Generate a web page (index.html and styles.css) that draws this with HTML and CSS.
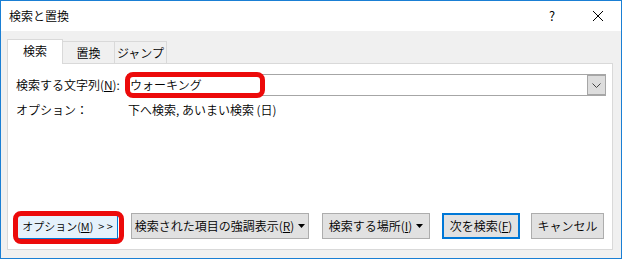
FILE: index.html
```html
<!DOCTYPE html>
<html lang="ja">
<head>
  <meta charset="UTF-8">
  <title>検索と置換</title>
  <link rel="stylesheet" href="styles.css">
</head>
<body>
  <div class="window">
    <!-- Title bar -->
    <div class="titlebar">
      <div class="title">検索と置換</div>
      <div class="caption-btn help">?</div>
      <div class="caption-btn close">
        <svg width="10" height="10" viewBox="0 0 10 10"><path d="M0 0 L10 10 M10 0 L0 10" stroke="#000" stroke-width="1" fill="none"/></svg>
      </div>
    </div>

    <div class="dialog">
      <!-- Tabs -->
      <div class="tabs">
        <div class="tab active">検索</div>
        <div class="tab">置換</div>
        <div class="tab">ジャンプ</div>
      </div>

      <!-- Tab panel -->
      <div class="panel">
        <div class="fields">
          <label class="field-label">検索する文字列(<u>N</u>):</label>
          <div class="combo">
            <span class="combo-text">ウォーキング</span>
            <div class="combo-btn">
              <svg width="9" height="5" viewBox="0 0 9 5"><path d="M0.5 0.5 L4.5 4.5 L8.5 0.5" stroke="#444" stroke-width="1" fill="none"/></svg>
            </div>
            <div class="mark mark-input"></div>
          </div>
          <div class="field-label opt-label">オプション：</div>
          <div class="opt-value">下へ検索, あいまい検索 (日)</div>
        </div>

        <div class="buttons">
          <div class="btn btn-options">オプション(<u>M</u>)<span class="more">&gt; &gt;</span>
            <div class="mark mark-options"></div>
          </div>
          <div class="btn btn-highlight">検索された項目の強調表示(<u>R</u>)<svg class="arrow" width="7" height="4" viewBox="0 0 7 4"><path d="M0 0 L7 0 L3.5 4 Z" fill="#000"/></svg></div>
          <div class="btn btn-where">検索する場所(<u>I</u>)<svg class="arrow" width="7" height="4" viewBox="0 0 7 4"><path d="M0 0 L7 0 L3.5 4 Z" fill="#000"/></svg></div>
          <div class="btn btn-default">次を検索(<u>F</u>)</div>
          <div class="btn btn-cancel">キャンセル</div>
        </div>
      </div>
    </div>
  </div>
</body>
</html>
```

FILE: styles.css
```css
/* Page */
body {
  margin: 0;
  background: #ffffff;
  font-family: "Noto Sans CJK JP", "Noto Sans", sans-serif;
  font-size: 12px;
  font-weight: 350;
  color: #000;
}

/* Dialog window frame */
.window {
  width: 622px;
  height: 259px;
  box-sizing: border-box;
  border: 1px solid #1a7fd4;
  display: flex;
  flex-direction: column;
  background: #f0f0f0;
}

/* Title bar */
.titlebar {
  height: 30px;
  background: #ffffff;
  display: flex;
  align-items: center;
}

.title {
  flex: 1;
  padding-left: 8px;
  line-height: 16px;
}

.caption-btn {
  width: 46px;
  height: 30px;
  display: flex;
  align-items: center;
  justify-content: center;
}

.help {
  font-size: 13px;
  padding-bottom: 1px;
  box-sizing: border-box;
}

/* Body of the dialog */
.dialog {
  flex: 1;
  padding: 8px 8px 8px 6px;
  display: flex;
  flex-direction: column;
}

/* Tabs */
.tabs {
  display: flex;
  align-items: flex-end;
  position: relative;
  z-index: 1;
  margin-bottom: -1px;
}

.tab {
  width: 53px;
  height: 23px;
  box-sizing: border-box;
  border: 1px solid #d9d9d9;
  background: #f0f0f0;
  margin-left: -1px;
  display: flex;
  align-items: center;
  justify-content: center;
  line-height: 16px;
}

.tab.active {
  width: 56px;
  height: 25px;
  margin-left: 0;
  background: #ffffff;
  border-bottom: none;
  position: relative;
  z-index: 1;
  padding-bottom: 2px;
}

/* Panel */
.panel {
  width: 606px;
  height: 187px;
  box-sizing: border-box;
  border: 1px solid #d9d9d9;
  background: #ffffff;
  padding: 10px 6px 10px 8px;
  display: flex;
  flex-direction: column;
}

.fields {
  display: grid;
  grid-template-columns: 111px 1fr;
  align-items: center;
  row-gap: 6px;
}

.field-label {
  line-height: 16px;
}

.combo {
  height: 22px;
  box-sizing: border-box;
  border: 1px solid #a6a6a6;
  position: relative;
  display: flex;
  align-items: center;
}

.combo-text {
  flex: 1;
  padding-left: 2px;
  line-height: 16px;
}

.combo-btn {
  width: 18px;
  height: 20px;
  box-sizing: border-box;
  border: 1px solid #a6a6a6;
  border-right-width: 0;
  background: #dddddd;
  display: flex;
  align-items: center;
  justify-content: center;
}

.opt-value {
  padding-left: 1px;
  line-height: 16px;
}

/* Command buttons */
.buttons {
  margin-top: auto;
  display: flex;
  padding-left: 1px;
}

.btn {
  height: 26px;
  box-sizing: border-box;
  border: 1px solid #adadad;
  background: #e1e1e1;
  display: flex;
  align-items: center;
  justify-content: center;
  line-height: 16px;
  position: relative;
  white-space: nowrap;
}

.btn .arrow {
  margin-left: 4px;
}

.btn .more {
  margin-left: 5px;
}

.btn-options {
  width: 101px;
  font-size: 11px;
  background: #e5f1fb;
  border-color: #0078d7;
}

.btn-highlight {
  width: 178px;
  margin-left: 13px;
}

.btn-where {
  width: 108px;
  margin-left: 13px;
}

.btn-default {
  width: 78px;
  margin-left: 12px;
  border: 2px solid #0078d7;
}

.btn-cancel {
  width: 73px;
  margin-left: 11px;
}

/* Red highlight marks drawn over the dialog */
.mark {
  position: absolute;
  box-sizing: border-box;
  border: 5px solid #ec0a0a;
  border-radius: 8px;
}

.mark-input {
  left: -3px;
  top: -3px;
  width: 140px;
  height: 26px;
}

.mark-options {
  left: -5px;
  top: -3px;
  width: 111px;
  height: 33px;
}
```
